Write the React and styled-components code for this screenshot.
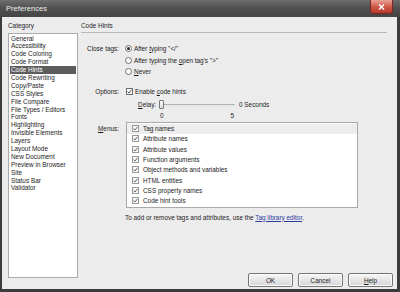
import React from "react";
import styled, { createGlobalStyle } from "styled-components";

const Global = createGlobalStyle`
  html, body { margin: 0; padding: 0; background: #333; }
  body { font-family: "Liberation Sans", Arial, sans-serif; }
  #root { width: 400px; height: 292px; }
`;

const Window = styled.div`
  width: 400px;
  height: 292px;
  display: flex;
  flex-direction: column;
  background: #3b3b3b;
  overflow: hidden;
  color: #1c1c1c;
  font-size: 6.4px;
`;

const TitleBar = styled.div`
  height: 17px;
  flex: none;
  display: flex;
  justify-content: space-between;
  background: linear-gradient(#6e6e6e, #525252 45%, #444 100%);
  color: #f2f2f2;
  font-size: 7.4px;
  padding: 0 7px 0 6px;
`;

const Title = styled.span`
  line-height: 17px;
  letter-spacing: 0.1px;
`;

const CloseBtn = styled.div`
  width: 23px;
  height: 14px;
  border-radius: 0 0 3px 3px;
  background: linear-gradient(#e9a396, #cf5a48 50%, #b9392c);
  border: 1px solid #7a2a22;
  border-top: none;
  box-sizing: border-box;
  display: flex;
  align-items: center;
  justify-content: center;
`;

const Body = styled.div`
  flex: 1;
  margin: 0 3px 3px 2px;
  background: #ececec;
  display: flex;
  padding: 5px 4px 0 6px;
  min-height: 0;
`;

const LeftCol = styled.div`
  width: 70px;
  display: flex;
  flex-direction: column;
  padding-bottom: 11px;
`;

const SectionTitle = styled.div`
  line-height: 8px;
  height: 8px;
`;

const CategoryList = styled.div`
  flex: 1;
  margin-top: 3px;
  background: #fff;
  border: 1px solid #aaa;
  padding: 0.5px 1px;
`;

const CategoryItem = styled.div`
  height: 7.9px;
  line-height: 7.9px;
  padding-left: 1px;
  white-space: nowrap;
  background: ${(p) => (p.$selected ? "#5c5c5c" : "transparent")};
  color: ${(p) => (p.$selected ? "#fff" : "inherit")};
`;

const RightCol = styled.div`
  flex: 1;
  margin-left: 3px;
  display: flex;
  flex-direction: column;
  padding-bottom: 2px;
`;

const Header = styled(SectionTitle)`
  height: auto;
  padding-bottom: 2px;
  border-bottom: 1px solid #b9b9b9;
  margin-right: 6px;
`;

const Section = styled.div`
  display: flex;
  margin-top: ${(p) => p.$mt || 0}px;
`;

const Label = styled.div`
  width: 38px;
  flex: none;
  text-align: right;
  line-height: ${(p) => p.$lh || 11}px;
  white-space: nowrap;
`;

const Controls = styled.div`
  display: flex;
  flex-direction: column;
  margin-left: ${(p) => p.$ml ?? 6}px;
`;

const OptionRow = styled.div`
  display: flex;
  align-items: center;
  height: ${(p) => p.$h || 11.5}px;
  white-space: pre;
`;

const Radio = styled.span`
  width: 7px;
  height: 7px;
  box-sizing: border-box;
  border-radius: 50%;
  border: 1px solid #6f6f6f;
  background: #fff;
  margin-right: 2px;
  display: flex;
  align-items: center;
  justify-content: center;
  flex: none;
  &::after {
    content: "";
    width: 3px;
    height: 3px;
    border-radius: 50%;
    background: ${(p) => (p.$checked ? "#2e2e2e" : "transparent")};
  }
`;

const Check = styled.span`
  width: 7px;
  height: 7px;
  box-sizing: border-box;
  border: 1px solid ${(p) => (p.$soft ? "#9a9a9a" : "#707070")};
  background: ${(p) => (p.$soft ? "#f6f6f6" : "#fff")};
  margin-right: ${(p) => p.$mr || 2}px;
  display: flex;
  align-items: center;
  justify-content: center;
  flex: none;
`;

const U = styled.span`
  text-decoration: underline;
`;

const DelayRow = styled.div`
  display: flex;
  align-items: center;
  height: 10px;
  margin-left: 12px;
  margin-top: 3px;
  white-space: nowrap;
`;

const DelayLabel = styled.span`
  width: 21px;
`;

const Slider = styled.div`
  width: 76px;
  display: flex;
  align-items: center;
`;

const Thumb = styled.span`
  width: 5px;
  height: 9px;
  box-sizing: border-box;
  border: 1px solid #7a7a7a;
  border-radius: 1px;
  background: linear-gradient(#fafafa, #dedede);
  flex: none;
`;

const Track = styled.span`
  flex: 1;
  height: 2px;
  box-sizing: border-box;
  border-top: 1px solid #b4b4b4;
  border-bottom: 1px solid #e6e6e6;
  background: #d0d0d0;
`;

const DelayValue = styled.span`
  margin-left: 4px;
`;

const TickRow = styled.div`
  display: flex;
  justify-content: space-between;
  width: 74px;
  margin-left: 34px;
  height: 10px;
  line-height: 10px;
  margin-top: 1px;
`;

const MenuList = styled.div`
  width: 232px;
  height: 86px;
  box-sizing: border-box;
  border: 1px solid #a9a9a9;
  background: #fff;
  padding-top: 1px;
`;

const MenuItem = styled.div`
  display: flex;
  align-items: center;
  height: 10.3px;
  padding-left: 5px;
  background: ${(p) => (p.$focus ? "#ededed" : "transparent")};
  white-space: nowrap;
`;

const Info = styled.div`
  margin-top: 6px;
  margin-left: 44px;
  line-height: 8px;
  white-space: nowrap;
`;

const Link = styled.a`
  color: #2b3c9c;
  text-decoration: underline;
`;

const Spacer = styled.div`
  flex: 1;
`;

const ButtonRow = styled.div`
  display: flex;
  justify-content: flex-end;
  gap: 5px;
`;

const Button = styled.div`
  width: 45px;
  height: 14px;
  box-sizing: border-box;
  border: 1px solid #767676;
  border-radius: 2px;
  background: linear-gradient(#f7f7f7, #e6e6e6 50%, #d6d6d6);
  box-shadow: inset 0 0 0 1px #fbfbfb;
  display: flex;
  align-items: center;
  justify-content: center;
`;

const CheckMark = ({ soft }) => (
  <svg width="5" height="5" viewBox="0 0 5 5">
    <path d="M0.6 2.6 L2 4 L4.5 0.8" fill="none" stroke={soft ? "#5a5a5a" : "#333"} strokeWidth="0.9" />
  </svg>
);

const categories = [
  "General",
  "Accessibility",
  "Code Coloring",
  "Code Format",
  "Code Hints",
  "Code Rewriting",
  "Copy/Paste",
  "CSS Styles",
  "File Compare",
  "File Types / Editors",
  "Fonts",
  "Highlighting",
  "Invisible Elements",
  "Layers",
  "Layout Mode",
  "New Document",
  "Preview in Browser",
  "Site",
  "Status Bar",
  "Validator",
];

const menus = [
  "Tag names",
  "Attribute names",
  "Attribute values",
  "Function arguments",
  "Object methods and variables",
  "HTML entities",
  "CSS property names",
  "Code hint tools",
];

export default function App() {
  return (
    <>
      <Global />
      <Window>
        <TitleBar>
          <Title>Preferences</Title>
          <CloseBtn>
            <svg width="7" height="6" viewBox="0 0 7 6">
              <path d="M1 0.5 L6 5.5 M6 0.5 L1 5.5" stroke="#fff" strokeWidth="1.4" />
            </svg>
          </CloseBtn>
        </TitleBar>
        <Body>
          <LeftCol>
            <SectionTitle>Category</SectionTitle>
            <CategoryList>
              {categories.map((c) => (
                <CategoryItem key={c} $selected={c === "Code Hints"}>
                  {c}
                </CategoryItem>
              ))}
            </CategoryList>
          </LeftCol>
          <RightCol>
            <Header>Code Hints</Header>
            <Section $mt={10}>
              <Label $lh={11.5}>Close tags:</Label>
              <Controls>
                <OptionRow>
                  <Radio $checked />
                  <span>
                    After <U>t</U>yping "&lt;/"
                  </span>
                </OptionRow>
                <OptionRow>
                  <Radio />
                  <span>
                    After typing the <U>o</U>pen tag's "&gt;"
                  </span>
                </OptionRow>
                <OptionRow>
                  <Radio />
                  <span>
                    <U>N</U>ever
                  </span>
                </OptionRow>
              </Controls>
            </Section>
            <Section $mt={8}>
              <Label>Options:</Label>
              <Controls $ml={7}>
                <OptionRow $h={11}>
                  <Check>
                    <CheckMark />
                  </Check>
                  <span>
                    Enable <U>c</U>ode hints
                  </span>
                </OptionRow>
                <DelayRow>
                  <DelayLabel>
                    <U>D</U>elay:
                  </DelayLabel>
                  <Slider>
                    <Thumb />
                    <Track />
                  </Slider>
                  <DelayValue>0 Seconds</DelayValue>
                </DelayRow>
                <TickRow>
                  <span>0</span>
                  <span>5</span>
                </TickRow>
              </Controls>
            </Section>
            <Section $mt={1}>
              <Label $lh={14}>
                <U>M</U>enus:
              </Label>
              <Controls $ml={7}>
                <MenuList>
                  {menus.map((m, i) => (
                    <MenuItem key={m} $focus={i === 0}>
                      <Check $soft $mr={4}>
                        <CheckMark soft />
                      </Check>
                      <span>{m}</span>
                    </MenuItem>
                  ))}
                </MenuList>
              </Controls>
            </Section>
            <Info>
              To add or remove tags and attributes, use the <Link>Tag library editor</Link>.
            </Info>
            <Spacer />
            <ButtonRow>
              <Button>OK</Button>
              <Button>Cancel</Button>
              <Button>
                <span>
                  <U>H</U>elp
                </span>
              </Button>
            </ButtonRow>
          </RightCol>
        </Body>
      </Window>
    </>
  );
}
